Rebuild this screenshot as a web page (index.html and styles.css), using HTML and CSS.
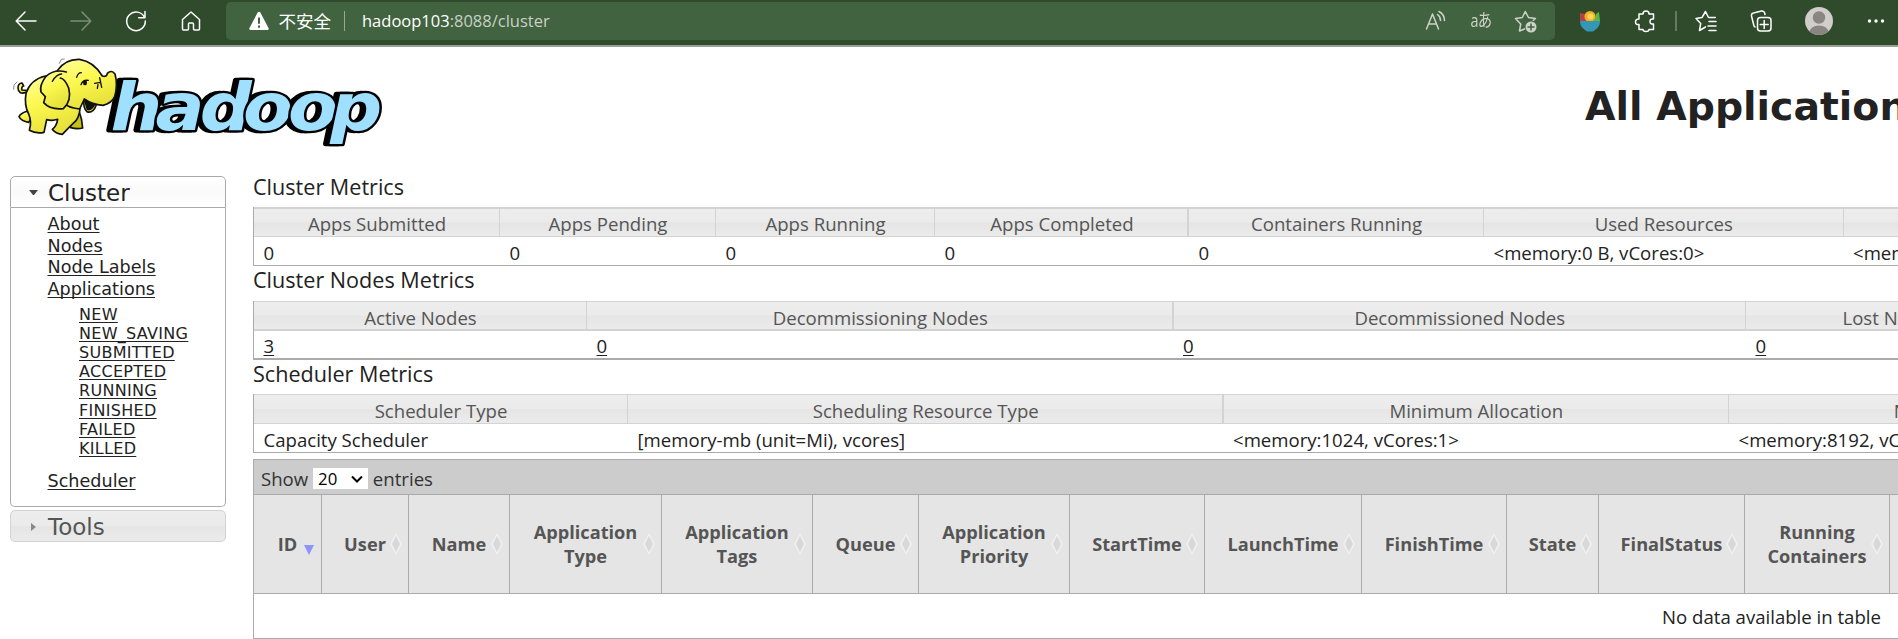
FILE: index.html
```html
<!DOCTYPE html>
<html lang="en">
<head>
<meta charset="utf-8">
<title>All Applications</title>
<link rel="stylesheet" href="styles.css">
</head>
<body>
<header class="browser">
  <nav class="nav-buttons">
    <svg class="icon" viewBox="0 0 24 24"><path d="M22 12H2.500M11 3L2.200 12l8.800 9"/></svg>
    <svg class="icon dim" viewBox="0 0 24 24"><path d="M2 12h19.500M13 3l8.800 9-8.800 9"/></svg>
    <svg class="icon" viewBox="0 0 24 24"><path d="M20.500 8.500A9.300 9.300 0 1 0 21.300 12M21 2.500v6.300h-6.300"/></svg>
    <svg class="icon" viewBox="0 0 24 24"><path d="M3.500 10.500L12 3l8.500 7.500V20q0 1-1 1h-4q-1 0-1-1v-5q0-1-1-1h-3q-1 0-1 1v5q0 1-1 1h-4q-1 0-1-1z"/></svg>
  </nav>
  <div class="address">
    <svg class="warn" viewBox="0 0 20 20"><path d="M10 .8Q11 .8 11.500 1.800L19.500 17q.8 2-1.200 2H1.700Q-.3 19 .5 17L8.500 1.800Q9 .8 10 .8z" fill="#fff"/><path d="M10 6.500v6.300M10 14.500v2.200" stroke="#42633f" stroke-width="2"/></svg>
    <span class="insecure">不安全</span>
    <span class="bar-sep"></span>
    <span class="url"><b>hadoop103</b>:8088/cluster</span>
    <div class="address-tools">
      <svg class="icon soft" viewBox="0 0 24 24"><path d="M2.500 20L8.500 5l6 15M4.700 15h7.700M13.500 5.500q3 2 3 6M15 2.500q5.500 3 5.500 9"/></svg>
      <span class="translate">aあ</span>
      <svg class="icon soft" viewBox="0 0 24 24"><path d="M10.500 20l-5 2 1.200-7L1.500 9.500l6.800-1L11.300 2.500l3.200 6 7 1-2.300 1.800"/><circle cx="17" cy="18" r="5.500" fill="#cdd3cb" stroke="none"/><path d="M17 15v6M14 18h6" stroke="#42633f"/></svg>
    </div>
  </div>
  <div class="extensions">
    <svg class="icon" viewBox="0 0 24 24"><g stroke="none"><path d="M2 12V4l5 1 4 7z" fill="#b5404a"/><path d="M16 12l2-7 3-2 1 9z" fill="#54b948"/><circle cx="12" cy="7.500" r="5.500" fill="#f5b021"/><circle cx="12.500" cy="7.500" r="3" fill="#ffd65a"/><path d="M2 12h20q0 6-5 9l-2 1.500H9L7 21Q2 18 2 12z" fill="#3397b5"/></g></svg>
    <svg class="icon puzzle" viewBox="0 0 24 24"><path d="M6 5h4q0-3 3-3t3 3h4.500v5q-3.500-.5-3.500 2.500t3.500 2.500v5.500H16q0 2-3 2t-3-2H6v-5q-3.500.5-3.500-2.500T6 10z"/></svg>
    <span class="ext-sep"></span>
    <svg class="icon" viewBox="0 0 24 24"><path d="M11.500 18l-6 3.500 1.200-7L2 9.500l6-1L11.500 2.500l3 6h6.800M15 12.500h7M14 17h8M15 21.500h7"/></svg>
    <svg class="icon collect" viewBox="0 0 24 24"><rect x="8.500" y="8.500" width="13.500" height="13.500" rx="3"/><path d="M15.200 11.500v8M11.200 15.500h8M5 17L2.500 7Q2 4.500 4.500 4l8-2q2.500-.5 3.200 2L16 5.500M5 17l1 1"/></svg>
    <svg class="avatar" viewBox="0 0 28 28"><defs><clipPath id="face"><circle cx="14" cy="14" r="14"/></clipPath></defs><g clip-path="url(#face)"><rect width="28" height="28" fill="#d0cdca"/><circle cx="14" cy="10.500" r="6.200" fill="#8b8582"/><ellipse cx="14" cy="26.500" rx="10" ry="8" fill="#8b8582"/></g></svg>
    <svg class="icon dots" viewBox="0 0 24 24"><g fill="#fff" stroke="none"><circle cx="5.500" cy="12" r="1.700"/><circle cx="12" cy="12" r="1.700"/><circle cx="18.500" cy="12" r="1.700"/></g></svg>
  </div>
</header>

<section class="banner">
  <svg class="logo" viewBox="0 0 1200 315" role="img">
    <g class="wordmark"><text transform="scale(1.09 1)" x="304 428 550 669 793 909" y="239">hadoop</text></g>
    <defs><linearGradient id="skin" x1="0" y1="0" x2=".4" y2="1"><stop offset="0" stop-color="#ffffa0"/><stop offset=".5" stop-color="#fbf84e"/><stop offset="1" stop-color="#e8e23c"/></linearGradient></defs>
    <g fill="url(#skin)" stroke="#111" stroke-width="5" stroke-linejoin="round" stroke-linecap="round">
      <path d="M77 128Q55 134 54 114Q54 100 66 99L71 108Q63 110 66 120L78 121"/>
      <path d="M80 184Q62 190 57 200Q64 214 86 217L100 195z"/>
      <path d="M236 180Q246 205 248 234Q232 238 212 233L210 205z" fill="#c5c013"/>
      <path d="M136 78Q92 88 78 130Q72 165 86 192Q96 215 88 241Q108 252 132 247L140 209Q156 214 173 208Q170 228 157 238Q169 252 187 253Q206 233 228 212Q242 192 239 166Q190 120 136 78z"/>
      <path d="M252 146Q248 175 262 186Q280 190 289 164z" fill="#e5df32"/>
      <path d="M254 150L262 178Q274 182 283 164z" fill="#111"/>
      <path d="M172 62Q195 27 238 28Q282 35 307 78Q320 82 322 70Q334 58 345 72Q354 104 344 140Q335 160 309 166Q276 164 253 147L239 177Q208 174 192 160z"/>
      <path d="M199 66Q163 56 137 80Q118 105 123 126L136 140L131 158Q150 180 190 176Q216 152 206 114Q195 86 181 84"/>
      <path d="M185 72Q170 72 157 94M244 68Q234 68 230 82M243 104Q248 89 265 91M284 100L302 97M299 83L305 112M294 104L292 115" fill="none" stroke-width="4"/>
      <ellipse cx="255" cy="98" rx="6" ry="8" fill="#111" stroke="none"/>
      <path d="M178 40L184 28L193 27M41 118L42 105L51 96" fill="none" stroke="#888" stroke-width="3"/>
    </g>
  </svg>
  <h1 class="title">All Applications</h1>
</section>

<div class="page">
  <aside class="sidebar">
    <h3 class="acc-head open"><i class="tri down"></i>Cluster</h3>
    <div class="acc-body">
      <ul class="links">
        <li><a>About</a></li><li><a>Nodes</a></li><li><a>Node Labels</a></li>
        <li><a>Applications</a>
          <ul class="sublinks">
            <li><a>NEW</a></li><li><a>NEW_SAVING</a></li><li><a>SUBMITTED</a></li><li><a>ACCEPTED</a></li>
            <li><a>RUNNING</a></li><li><a>FINISHED</a></li><li><a>FAILED</a></li><li><a>KILLED</a></li>
          </ul>
        </li>
        <li><a>Scheduler</a></li>
      </ul>
    </div>
    <h3 class="acc-head closed"><i class="tri right"></i>Tools</h3>
  </aside>

  <main class="content">
    <h2 class="caption first">Cluster Metrics</h2>
    <div class="metrics cluster">
      <div class="th">Apps Submitted</div><div class="th">Apps Pending</div><div class="th">Apps Running</div><div class="th">Apps Completed</div><div class="th thick">Containers Running</div><div class="th">Used Resources</div><div class="th"></div>
      <div class="td">0</div><div class="td">0</div><div class="td">0</div><div class="td">0</div><div class="td">0</div><div class="td">&lt;memory:0 B, vCores:0&gt;</div><div class="td">&lt;memory</div>
    </div>
    <h2 class="caption">Cluster Nodes Metrics</h2>
    <div class="metrics nodes">
      <div class="th">Active Nodes</div><div class="th">Decommissioning Nodes</div><div class="th thick">Decommissioned Nodes</div><div class="th">Lost Nodes</div>
      <div class="td"><a>3</a></div><div class="td"><a>0</a></div><div class="td"><a>0</a></div><div class="td"><a>0</a></div>
    </div>
    <h2 class="caption last">Scheduler Metrics</h2>
    <div class="metrics scheduler">
      <div class="th">Scheduler Type</div><div class="th">Scheduling Resource Type</div><div class="th thick">Minimum Allocation</div><div class="th">Maximum Allocation</div>
      <div class="td">Capacity Scheduler</div><div class="td">[memory-mb (unit=Mi), vcores]</div><div class="td">&lt;memory:1024, vCores:1&gt;</div><div class="td">&lt;memory:8192, vCores:4&gt;</div>
    </div>
    <div class="apps">
      <div class="toolbar">Show <span class="select">20<svg viewBox="0 0 12 8"><path d="M1 1.500l5 5 5-5" fill="none" stroke="#000" stroke-width="2"/></svg></span> entries</div>
      <div class="apps-head">
        <div>ID<i class="sorted"></i></div><div>User<i class="sort"></i></div><div>Name<i class="sort"></i></div><div>Application<br>Type<i class="sort"></i></div><div>Application<br>Tags<i class="sort"></i></div><div>Queue<i class="sort"></i></div><div>Application<br>Priority<i class="sort"></i></div><div>StartTime<i class="sort"></i></div><div>LaunchTime<i class="sort"></i></div><div>FinishTime<i class="sort"></i></div><div>State<i class="sort"></i></div><div>FinalStatus<i class="sort"></i></div><div>Running<br>Containers<i class="sort"></i></div><div></div>
      </div>
      <div class="empty">No data available in table</div>
    </div>
  </main>
</div>
</body>
</html>
```
FILE: styles.css
```css
* { box-sizing: border-box; }
html, body { margin: 0; width: 1898px; height: 639px; overflow: hidden; background: #fff; }
body { font-family: "Open Sans", "Noto Sans", sans-serif; font-size: 18.6px; color: #222; }
h1, h2, h3, ul { margin: 0; padding: 0; font-weight: normal; }
ul { list-style: none; }
a { text-decoration: underline; text-decoration-thickness: 1px; text-underline-offset: 2px; text-decoration-skip-ink: none; }

/* Browser toolbar */
.browser { display: flex; height: 47px; padding-left: 14px; background: #2f4b2c; border-bottom: 2px solid #969f94; }
.browser > * { height: 38px; margin-top: 2px; display: flex; align-items: center; }
.nav-buttons { gap: 31px; }
.icon { flex: none; width: 24px; height: 24px; fill: none; stroke: #fff; stroke-width: 1.5; stroke-linejoin: round; stroke-linecap: round; }
.dim { stroke: #7b8e78; }
.soft { stroke: #cdd3cb; }
.address { width: 1329px; margin-left: 23px; padding: 0 17px 0 23px; background: #42633f; border-radius: 5px; color: #fff; }
.warn { width: 20px; height: 20px; }
.insecure { margin-left: 9.5px; font: 17.5px/38px "Noto Sans CJK SC", sans-serif; }
.bar-sep { width: 1px; height: 20px; margin: 0 17px 0 13px; background: #97a895; }
.url { padding-bottom: 2px; font-size: 16.5px; color: #c8d0c6; }
.url b { font-weight: normal; color: #fff; }
.address-tools { display: flex; align-items: center; gap: 21px; margin-left: auto; }
.translate { display: flex; justify-content: center; width: 24px; padding-bottom: 2px; color: #cdd3cb; font: 18px/24px "Open Sans", "Noto Sans CJK JP", sans-serif; letter-spacing: -1px; white-space: nowrap; transform: scaleX(.8); }
.extensions { margin-left: 23px; }
.puzzle { margin-left: 31px; }
.ext-sep { width: 2px; height: 20px; margin: 0 17px 0 18px; background: #667963; }
.collect { margin-left: 31px; }
.avatar { width: 28px; height: 28px; margin-left: 32px; }
.dots { margin-left: 31px; }

/* Logo and title */
.banner { display: flex; height: 129px; width: 2000px; }
.logo { width: 400px; height: 105px; margin-top: 3px; }
.wordmark { filter: drop-shadow(-12px 0 0 #000); }
.wordmark text { font: italic bold 200px "DejaVu Sans", sans-serif; fill: #9fdfff; stroke: #000; stroke-width: 14px; paint-order: stroke; stroke-linejoin: round; }
.title { margin: 35px 0 0 1185px; font: bold 39.4px/48px "DejaVu Sans", sans-serif; white-space: nowrap; }

/* Sidebar */
.page { display: flex; width: 3400px; }
.sidebar { width: 216px; margin-left: 10px; font-family: "DejaVu Sans", sans-serif; }
.acc-head { display: flex; align-items: center; height: 32px; padding-top: 1px; font-size: 23px; border: 1px solid #aaa; border-radius: 5px; }
.acc-head.open { border-radius: 5px 5px 0 0; background: linear-gradient(#fff, #fafafa 50%, #fff); }
.acc-head.closed { margin-top: 3px; color: #555; border-color: #d3d3d3; background: linear-gradient(#ededed 0, #ebebeb 50%, #e5e5e5 52%, #ebebeb); }
.tri { width: 9px; margin: 0 10px 0 18px; }
.tri.down { border: 4.500px solid transparent; border-top: 5px solid #444; border-bottom: 0; }
.tri.right { width: 5px; margin: 0 12px 0 20px; border: 4.500px solid transparent; border-left: 5px solid #888; border-right: 0; }
.acc-body { height: 299px; padding: 6px 0 0 36.500px; border: 1px solid #aaa; border-top: 0; border-radius: 0 0 5px 5px; }
.links { font-size: 17.6px; line-height: 21.7px; }
.sublinks { margin: 4px 0 13px 31.500px; font-size: 16px; line-height: 19.15px; letter-spacing: .3px; }

/* Metric tables */
.content { width: 3037px; margin-left: 27px; }
.caption { height: 35px; padding-top: 3px; font-size: 21.6px; line-height: 21px; }
.caption.first { height: 31px; padding-top: 0; }
.caption.last { height: 34px; }
.metrics { display: grid; border-left: 1px solid #aaa; border-bottom: 1px solid #aaa; white-space: nowrap; overflow: hidden; }
.th { height: 30px; padding-top: 2.500px; line-height: 25px; text-align: center; color: #555; border: solid #d3d3d3; border-width: 1px 0; box-shadow: -1px 0 #d3d3d3; background: linear-gradient(#ededed 0, #ebebeb 48%, #e5e5e5 52%, #ebebeb); }
.th.thick { box-shadow: -2px 0 #d3d3d3; }
.td { height: 28px; padding: 3px 0 0 9.500px; line-height: 25px; }
.cluster { grid-template-columns: 246px 216px 219px 254px 295px 359.500px 1446px; }
.cluster .th { border-top-width: 2px; padding-top: 2px; }
.nodes { grid-template-columns: 333px 586.500px 572.500px 290px; border-bottom-width: 2px; }
.nodes .th { border-bottom-width: 2px; }
.nodes .td { height: 27px; padding-top: 2px; }
.nodes, .scheduler { grid-auto-columns: 1fr; }
.scheduler { grid-template-columns: 374px 595.500px 505.500px 507px; }
.scheduler .th { padding-top: 3px; }

/* Applications table */
.apps { margin-top: 6px; border: 1px solid #aaa; }
.toolbar { display: flex; align-items: center; height: 35px; padding: 2px 0 0 7px; background: #ccc; color: #333; border-bottom: 1px solid #aaa; white-space: pre; }
.select { display: flex; align-items: center; justify-content: space-between; width: 55px; height: 21px; margin: 1px 0 0; padding: 0 5px; background: #fff; color: #000; font-size: 16.8px; }
.select svg { width: 12px; height: 8px; }
.apps-head { display: grid; grid-template-columns: 68px 87px 101px 152px 151px 106px 151px 135px 157px 145px 92px 146px 145px 1400px; height: 99px; border-bottom: 1px solid #aaa; font-size: 18.2px; font-weight: bold; line-height: 24.300px; color: #555; background: #e5e5e5; }
.apps-head div { position: relative; align-content: center; text-align: center; border-right: 1px solid #aaa; }
.sort, .sorted { position: absolute; right: 6px; top: 38px; width: 12px; height: 22px; }
.sort { background: #f0f0f0; clip-path: polygon(50% 0, 100% 50%, 50% 100%, 0 50%); }
.sort::before { content: ""; position: absolute; inset: 3px 2px; background: linear-gradient(#d8d8d8 47%, #eee 47% 53%, #d8d8d8 53%); clip-path: polygon(50% 0, 100% 50%, 50% 100%, 0 50%); }
.sorted { right: 7px; top: 50px; width: 10px; height: 10px; background: #8e94ff; clip-path: polygon(0 0, 100% 0, 50% 100%); }
.empty { height: 44px; padding-top: 5px; line-height: 36px; text-align: center; }
```
